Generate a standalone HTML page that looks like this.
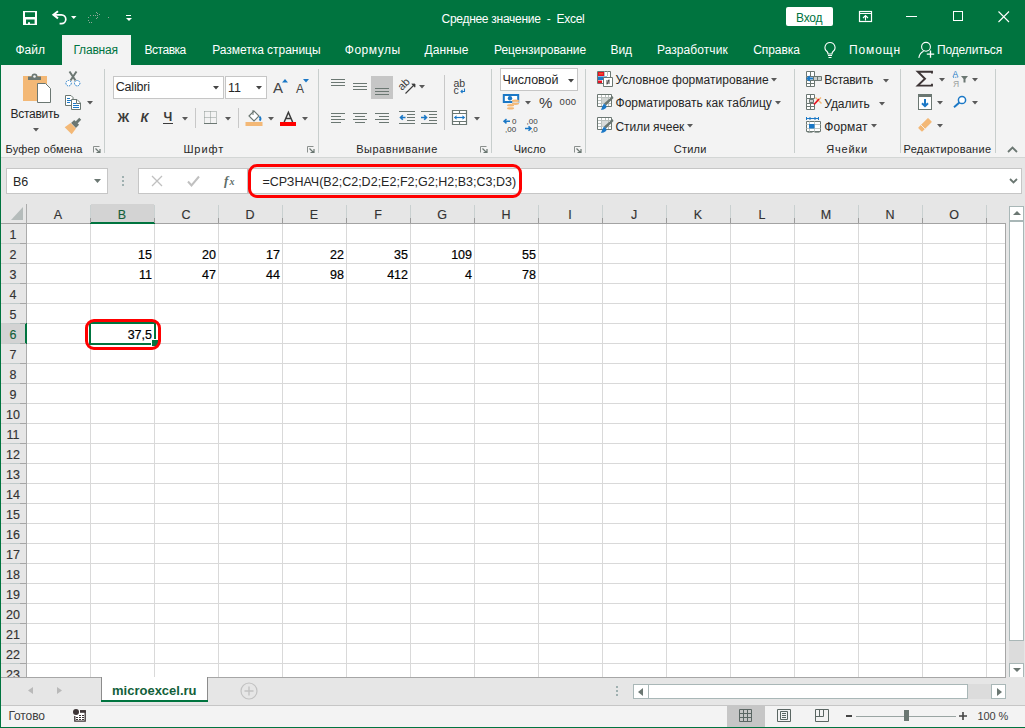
<!DOCTYPE html><html><head><meta charset="utf-8"><style>
*{box-sizing:border-box;margin:0;padding:0}
html,body{width:1025px;height:728px;overflow:hidden}
body{position:relative;background:#f3f3f3;font-family:"Liberation Sans",sans-serif;color:#262626}
.a{position:absolute}
.t{position:absolute;white-space:nowrap;line-height:1}
svg{position:absolute;overflow:visible}
.tab{position:absolute;top:45px;font-size:12px;color:#fff;white-space:nowrap;line-height:1}
.gl{position:absolute;top:145px;font-size:12px;color:#262626;white-space:nowrap;line-height:1}
.rt{position:absolute;font-size:12px;color:#262626;white-space:nowrap;line-height:1}
.v{position:absolute;font-size:12.5px;line-height:1;color:#000;text-align:right;white-space:nowrap;-webkit-text-stroke:0.2px #000}
.ch{position:absolute;top:204px;height:19px;width:64px;text-align:center;font-size:12.5px;line-height:1;color:#333;-webkit-text-stroke:0.15px currentColor}
.rh{position:absolute;left:0;width:26px;text-align:center;font-size:12.5px;line-height:1;color:#333;-webkit-text-stroke:0.15px currentColor}
</style></head><body><div class="a" style="left:0px;top:0px;width:1025px;height:65px;background:#00743f;"></div>
<svg style="left:0px;top:0px" width="60" height="30" viewBox="0 0 60 30"><path fill-rule="evenodd" fill="#fff" d="M23 11H37V25H23Z M25 12.2H35V17H25Z M26 19.6H34.6V23.8H30V22.3H28V23.8H26Z"/></svg>
<svg style="left:0px;top:0px" width="80" height="30" viewBox="0 0 80 30"><path d="M58 11.2L53.4 14.8L58 18.4" fill="none" stroke="#fff" stroke-width="2"/><path d="M54 14.8H61.4A4.4 4.4 0 0 1 61.4 23.6H59.6" fill="none" stroke="#fff" stroke-width="1.7"/></svg>
<svg style="left:70.8px;top:16px" width="5.5" height="3" viewBox="0 0 5.5 3"><path d="M0 0H5.5L2.75 3Z" fill="#fff"/></svg>
<svg style="left:0px;top:0px" width="120" height="30" viewBox="0 0 120 30"><rect x="88" y="17" width="1" height="1" fill="#8ea597"/><rect x="88" y="20" width="1" height="1" fill="#8ea597"/><rect x="89" y="22" width="1" height="1" fill="#8ea597"/><rect x="91" y="22" width="1" height="1" fill="#8ea597"/><rect x="90" y="15" width="1" height="1" fill="#8ea597"/><rect x="93" y="15" width="1" height="1" fill="#8ea597"/><rect x="95" y="15" width="1" height="1" fill="#8ea597"/><rect x="97" y="15" width="1" height="1" fill="#8ea597"/><rect x="96" y="12" width="1" height="1" fill="#8ea597"/><rect x="97" y="13" width="1" height="1" fill="#8ea597"/><rect x="99" y="14" width="1" height="1" fill="#8ea597"/><rect x="97" y="17" width="1" height="1" fill="#8ea597"/><rect x="96" y="18" width="1" height="1" fill="#8ea597"/><rect x="108" y="17" width="1" height="1" fill="#8ea597"/></svg>
<div class="a" style="left:126px;top:15px;width:5px;height:1.3px;background:#fff;"></div>
<svg style="left:125.5px;top:18px" width="6" height="3" viewBox="0 0 6 3"><path d="M0 0H6L3 3Z" fill="#fff"/></svg>
<div class="t" style="left:441.5px;top:13px;font-size:12px;color:#fff;letter-spacing:-0.28px;">Среднее значение&nbsp; -&nbsp; Excel</div>
<div class="a" style="left:786px;top:7px;width:47px;height:19px;background:#fff;border-radius:2px"></div>
<div class="t" style="left:796px;top:11.5px;font-size:12px;color:#00743f;letter-spacing:-0.233px;">Вход</div>
<svg style="left:858px;top:10px" width="15" height="12" viewBox="0 0 15 12"><rect x="1.5" y="1.5" width="12" height="10" fill="none" stroke="#fff" stroke-width="1.2"/><path d="M1.5 3.5H13.5" stroke="#fff" stroke-width="1"/><path d="M7.5 10.5V5.5M5 8L7.5 5.5L10 8" fill="none" stroke="#fff" stroke-width="1.1"/></svg>
<div class="a" style="left:906px;top:16px;width:11px;height:1px;background:#fff;"></div>
<div class="a" style="left:953px;top:11px;width:10px;height:10px;border:1px solid #fff"></div>
<svg style="left:998px;top:11px" width="12" height="12" viewBox="0 0 12 12"><path d="M0.5 0.5L11 11M11 0.5L0.5 11" stroke="#fff" stroke-width="1.1"/></svg>
<div class="a" style="left:62px;top:35px;width:69px;height:30px;background:#f3f3f3;"></div>
<div class="tab" style="left:15.5px;top:44px;color:#fff;letter-spacing:0.0px;">Файл</div>
<div class="tab" style="left:73.4px;top:44px;color:#00743f;letter-spacing:-0.167px;">Главная</div>
<div class="tab" style="left:144.6px;top:44px;color:#fff;letter-spacing:-0.5px;">Вставка</div>
<div class="tab" style="left:212.2px;top:44px;color:#fff;letter-spacing:-0.031px;">Разметка страницы</div>
<div class="tab" style="left:344.8px;top:44px;color:#fff;letter-spacing:0.5px;">Формулы</div>
<div class="tab" style="left:424.4px;top:44px;color:#fff;letter-spacing:0.12px;">Данные</div>
<div class="tab" style="left:494px;top:44px;color:#fff;letter-spacing:-0.038px;">Рецензирование</div>
<div class="tab" style="left:610.6px;top:44px;color:#fff;letter-spacing:-0.15px;">Вид</div>
<div class="tab" style="left:657px;top:44px;color:#fff;letter-spacing:0.07px;">Разработчик</div>
<div class="tab" style="left:753.2px;top:44px;color:#fff;letter-spacing:-0.067px;">Справка</div>
<div class="tab" style="left:849px;top:44px;color:#fff;letter-spacing:0.86px;">Помощн</div>
<div class="tab" style="left:936.9px;top:44px;color:#fff;letter-spacing:-0.111px;">Поделиться</div>
<svg style="left:822px;top:41px" width="16" height="18" viewBox="0 0 16 18"><path d="M8 1.5a5 5 0 0 0-3 9c.8.7 1 1.5 1 2.5h4c0-1 .2-1.8 1-2.5a5 5 0 0 0-3-9z" fill="none" stroke="#fff" stroke-width="1.1"/><path d="M6 14.5h4M6.5 16.5h3" stroke="#fff" stroke-width="1.1"/></svg>
<svg style="left:0px;top:0px" width="1025" height="65" viewBox="0 0 1025 65"><circle cx="926" cy="46.8" r="4.4" fill="none" stroke="#fff" stroke-width="1.1"/><path d="M918.8 57.8Q919.8 52.8 923.6 51.2" fill="none" stroke="#fff" stroke-width="1.1"/><path d="M930.5 50.5V57.8M926.8 54.2H934.2" stroke="#fff" stroke-width="1.3"/></svg>
<div class="a" style="left:0px;top:65px;width:1025px;height:92px;background:#f3f3f3;"></div>
<div class="a" style="left:0px;top:157px;width:1025px;height:1px;background:#d3d6d5;"></div>
<div class="a" style="left:104px;top:69px;width:1px;height:84px;background:#c8cecd;"></div>
<div class="a" style="left:318px;top:69px;width:1px;height:84px;background:#c8cecd;"></div>
<div class="a" style="left:491px;top:69px;width:1px;height:84px;background:#c8cecd;"></div>
<div class="a" style="left:585px;top:69px;width:1px;height:84px;background:#c8cecd;"></div>
<div class="a" style="left:794px;top:69px;width:1px;height:84px;background:#c8cecd;"></div>
<div class="a" style="left:900px;top:69px;width:1px;height:84px;background:#c8cecd;"></div>
<div class="a" style="left:995px;top:69px;width:1px;height:84px;background:#c8cecd;"></div>
<div class="gl" style="left:5.6px;top:144px;font-size:11px;letter-spacing:0.182px;">Буфер обмена</div>
<div class="gl" style="left:183.4px;top:144px;font-size:11px;letter-spacing:0.9px;">Шрифт</div>
<div class="gl" style="left:356.3px;top:144px;font-size:11px;letter-spacing:0.482px;">Выравнивание</div>
<div class="gl" style="left:513.7px;top:144px;font-size:11px;letter-spacing:0.075px;">Число</div>
<div class="gl" style="left:673.8px;top:144px;font-size:11px;letter-spacing:0.2px;">Стили</div>
<div class="gl" style="left:826.2px;top:144px;font-size:11px;letter-spacing:0.8px;">Ячейки</div>
<div class="gl" style="left:903.5px;top:144px;font-size:11px;letter-spacing:0.285px;">Редактирование</div>
<svg style="left:93px;top:146px" width="8" height="7" viewBox="0 0 8 7"><path d="M0.5 6.5V0.5H6.5" fill="none" stroke="#8a8f8d" stroke-width="1"/><path d="M2.5 2.5L6.5 6.5M3.5 6.5H7V3" fill="none" stroke="#6b7772" stroke-width="1.2"/></svg>
<svg style="left:307px;top:146px" width="8" height="7" viewBox="0 0 8 7"><path d="M0.5 6.5V0.5H6.5" fill="none" stroke="#8a8f8d" stroke-width="1"/><path d="M2.5 2.5L6.5 6.5M3.5 6.5H7V3" fill="none" stroke="#6b7772" stroke-width="1.2"/></svg>
<svg style="left:480px;top:146px" width="8" height="7" viewBox="0 0 8 7"><path d="M0.5 6.5V0.5H6.5" fill="none" stroke="#8a8f8d" stroke-width="1"/><path d="M2.5 2.5L6.5 6.5M3.5 6.5H7V3" fill="none" stroke="#6b7772" stroke-width="1.2"/></svg>
<svg style="left:574px;top:146px" width="8" height="7" viewBox="0 0 8 7"><path d="M0.5 6.5V0.5H6.5" fill="none" stroke="#8a8f8d" stroke-width="1"/><path d="M2.5 2.5L6.5 6.5M3.5 6.5H7V3" fill="none" stroke="#6b7772" stroke-width="1.2"/></svg>
<svg style="left:22px;top:72px" width="30" height="32" viewBox="0 0 30 32"><rect x="1" y="4" width="24" height="25" fill="#f3b876"/><path d="M6 8V4.5H9.5a3 3 0 0 1 6 0H19V8Z" fill="#6b7772"/><circle cx="12.5" cy="4.5" r="1.3" fill="#f3f3f3"/><path d="M15.5 11.5H23.5L28.5 16.5V30.5H15.5Z" fill="#fff" stroke="#6b7772" stroke-width="1"/></svg>
<div class="t" style="left:10.6px;top:108px;font-size:12px;color:#262626;letter-spacing:-0.286px;">Вставить</div>
<svg style="left:32.5px;top:127.5px" width="6" height="3.5" viewBox="0 0 6 3.5"><path d="M0 0H6L3.0 3.5Z" fill="#595959"/></svg>
<svg style="left:0px;top:0px" width="100" height="140" viewBox="0 0 100 140"><path d="M69.5 71.5L75.5 80.5M76.5 71.5L70.5 80.5" stroke="#6b7772" stroke-width="2"/><circle cx="68.6" cy="83.2" r="2.7" fill="#fff" stroke="#1b78c6" stroke-width="1" stroke-dasharray="1.4 0.9"/><circle cx="77.2" cy="83.2" r="2.7" fill="#fff" stroke="#1b78c6" stroke-width="1" stroke-dasharray="1.4 0.9"/></svg>
<svg style="left:0px;top:0px" width="100" height="140" viewBox="0 0 100 140"><path d="M65.5 95.5H71L73 97.5V105.5H65.5Z" fill="#fff" stroke="#6b7772"/><path d="M67 98.5H70M67 100.5H71M67 102.5H70" stroke="#1b78c6"/><path d="M71.5 99.5H77L80.5 103V109.5H71.5Z" fill="#fff" stroke="#6b7772"/><path d="M76.5 99.5V103.5H80.5" fill="none" stroke="#6b7772"/><path d="M73 103.5H76M73 105.5H79M73 107.5H79" stroke="#1b78c6"/></svg>
<svg style="left:86.5px;top:101px" width="6" height="3.5" viewBox="0 0 6 3.5"><path d="M0 0H6L3.0 3.5Z" fill="#595959"/></svg>
<svg style="left:0px;top:0px" width="100" height="140" viewBox="0 0 100 140"><g transform="translate(73.5 125.5) rotate(45)"><rect x="-1.4" y="-9.5" width="2.8" height="5.5" fill="#6b7772"/><rect x="-3.4" y="-4.5" width="6.8" height="4.5" fill="#6b7772"/><path d="M-3.8 0.3H3.8L5 7.5H-5Z" fill="#f3b876"/></g></svg>
<div class="a" style="left:113px;top:76px;width:111px;height:23px;background:#fff;border:1px solid #c6c6c6"></div>
<div class="t" style="left:115.7px;top:81px;font-size:12.5px;color:#262626;letter-spacing:-0.167px;">Calibri</div>
<svg style="left:213.0px;top:85.5px" width="6" height="3.5" viewBox="0 0 6 3.5"><path d="M0 0H6L3.0 3.5Z" fill="#444"/></svg>
<div class="a" style="left:225px;top:76px;width:42px;height:23px;background:#fff;border:1px solid #c6c6c6"></div>
<div class="t" style="left:228px;top:82px;font-size:12.5px;color:#262626;">11</div>
<svg style="left:256.0px;top:85.5px" width="6" height="3.5" viewBox="0 0 6 3.5"><path d="M0 0H6L3.0 3.5Z" fill="#444"/></svg>
<div class="t" style="left:273px;top:80px;font-size:15px;color:#444;">A</div>
<svg style="left:282px;top:78.5px" width="6" height="3.5" viewBox="0 0 6 3.5"><path d="M0 3.5L3 0L6 3.5Z" fill="#1b78c6"/></svg>
<div class="t" style="left:296px;top:83px;font-size:12px;color:#444;">A</div>
<svg style="left:302.5px;top:78.5px" width="6" height="3.5" viewBox="0 0 6 3.5"><path d="M0 0H6L3 3.5Z" fill="#1b78c6"/></svg>
<div class="t" style="left:117.5px;top:111px;font-size:13px;color:#3b3b3b;font-weight:bold">Ж</div>
<div class="t" style="left:140.5px;top:111px;font-size:13px;color:#3b3b3b;font-weight:bold;font-style:italic">К</div>
<div class="t" style="left:163.5px;top:111px;font-size:12.5px;color:#3b3b3b;font-weight:bold">Ч</div>
<div class="a" style="left:163px;top:123px;width:10px;height:1px;background:#3b3b3b;"></div>
<svg style="left:181.5px;top:116.5px" width="6" height="3.5" viewBox="0 0 6 3.5"><path d="M0 0H6L3.0 3.5Z" fill="#595959"/></svg>
<div class="a" style="left:195px;top:108px;width:1px;height:20px;background:#c8c8c8;"></div>
<svg style="left:0px;top:0px" width="320" height="140" viewBox="0 0 320 140"><path d="M204.5 111.5H216.5V123M204.5 111.5V123M210.5 111.5V123M204.5 117.5H216.5" fill="none" stroke="#8d9692" stroke-width="1" stroke-dasharray="1 1"/><path d="M204 123.5H217" stroke="#6b7772" stroke-width="1"/></svg>
<svg style="left:224.5px;top:116.5px" width="6" height="3.5" viewBox="0 0 6 3.5"><path d="M0 0H6L3.0 3.5Z" fill="#595959"/></svg>
<div class="a" style="left:238px;top:108px;width:1px;height:20px;background:#c8c8c8;"></div>
<svg style="left:245px;top:107px" width="18" height="20" viewBox="0 0 18 20"><path d="M4 9L9 4L14 9L9 14Z" fill="#fff" stroke="#6b7772" stroke-width="1.1"/><path d="M8 3V8" stroke="#6b7772"/><path d="M14.5 9.5q2 2.5 0 4" fill="none" stroke="#1b78c6" stroke-width="2"/><rect x="0.5" y="15" width="17" height="4" fill="#f3b876"/></svg>
<svg style="left:267.5px;top:116.5px" width="6" height="3.5" viewBox="0 0 6 3.5"><path d="M0 0H6L3.0 3.5Z" fill="#595959"/></svg>
<svg style="left:0px;top:0px" width="320" height="140" viewBox="0 0 320 140"><path d="M284.2 122L288.4 112.3L292.6 122M285.8 118.6H291" fill="none" stroke="#3b3b3b" stroke-width="1.5"/></svg>
<div class="a" style="left:280px;top:122px;width:16px;height:4px;background:#ff0000;"></div>
<svg style="left:302.0px;top:116.5px" width="6" height="3.5" viewBox="0 0 6 3.5"><path d="M0 0H6L3.0 3.5Z" fill="#595959"/></svg>
<svg style="left:331px;top:79px" width="14" height="9" viewBox="0 0 14 9"><rect x="0" y="0" width="14" height="1" fill="#6b7772"/><rect x="0" y="3" width="14" height="1" fill="#6b7772"/><rect x="0" y="6" width="14" height="1" fill="#6b7772"/></svg>
<svg style="left:353px;top:83px" width="14" height="9" viewBox="0 0 14 9"><rect x="0" y="0" width="14" height="1" fill="#6b7772"/><rect x="0" y="3" width="14" height="1" fill="#6b7772"/><rect x="0" y="6" width="14" height="1" fill="#6b7772"/></svg>
<div class="a" style="left:371px;top:76px;width:22px;height:23px;background:#c6c6c6;"></div>
<svg style="left:375px;top:88px" width="14" height="9" viewBox="0 0 14 9"><rect x="0" y="0" width="14" height="1" fill="#6b7772"/><rect x="0" y="3" width="14" height="1" fill="#6b7772"/><rect x="0" y="6" width="14" height="1" fill="#6b7772"/></svg>
<svg style="left:0px;top:0px" width="440" height="100" viewBox="0 0 440 100"><text x="402" y="91" font-size="11" fill="#3b3b3b" font-family="Liberation Sans" transform="rotate(-45 402 91)">ab</text><path d="M405.5 93.5L414.5 84.5" stroke="#3b3b3b" stroke-width="1.1"/><path d="M411.8 84H415V87.2Z" fill="#3b3b3b" stroke="#3b3b3b" stroke-width="0.8"/></svg>
<svg style="left:418.5px;top:85px" width="6" height="3.5" viewBox="0 0 6 3.5"><path d="M0 0H6L3.0 3.5Z" fill="#595959"/></svg>
<svg style="left:331px;top:113px" width="14" height="11" viewBox="0 0 14 11"><rect x="0" y="0" width="14" height="1" fill="#6b7772"/><rect x="0" y="3" width="10" height="1" fill="#6b7772"/><rect x="0" y="6" width="14" height="1" fill="#6b7772"/><rect x="0" y="9" width="10" height="1" fill="#6b7772"/></svg>
<svg style="left:353px;top:113px" width="14" height="11" viewBox="0 0 14 11"><rect x="0" y="0" width="14" height="1" fill="#6b7772"/><rect x="2" y="3" width="10" height="1" fill="#6b7772"/><rect x="0" y="6" width="14" height="1" fill="#6b7772"/><rect x="2" y="9" width="10" height="1" fill="#6b7772"/></svg>
<svg style="left:375px;top:113px" width="14" height="11" viewBox="0 0 14 11"><rect x="0" y="0" width="14" height="1" fill="#6b7772"/><rect x="4" y="3" width="10" height="1" fill="#6b7772"/><rect x="0" y="6" width="14" height="1" fill="#6b7772"/><rect x="4" y="9" width="10" height="1" fill="#6b7772"/></svg>
<svg style="left:399px;top:111px" width="17" height="13" viewBox="0 0 17 13"><rect x="0" y="0" width="16" height="1" fill="#6b7772"/><rect x="0" y="12" width="16" height="1" fill="#6b7772"/><rect x="8" y="3" width="8" height="1" fill="#6b7772"/><rect x="8" y="6" width="8" height="1" fill="#6b7772"/><rect x="8" y="9" width="8" height="1" fill="#6b7772"/><path d="M6.5 6.5H1.5M3.8 4.2L1.5 6.5L3.8 8.8" fill="none" stroke="#1b78c6" stroke-width="1.6"/></svg>
<svg style="left:421px;top:111px" width="17" height="13" viewBox="0 0 17 13"><rect x="0" y="0" width="16" height="1" fill="#6b7772"/><rect x="0" y="12" width="16" height="1" fill="#6b7772"/><rect x="8" y="3" width="8" height="1" fill="#6b7772"/><rect x="8" y="6" width="8" height="1" fill="#6b7772"/><rect x="8" y="9" width="8" height="1" fill="#6b7772"/><path d="M0 6.5H5.5M3.2 4.2L5.5 6.5L3.2 8.8" fill="none" stroke="#1b78c6" stroke-width="1.6"/></svg>
<div class="a" style="left:444px;top:75px;width:1px;height:55px;background:#c8c8c8;"></div>
<svg style="left:0px;top:0px" width="480" height="100" viewBox="0 0 480 100"><text x="453.5" y="87" font-size="10.5" fill="#3b3b3b" font-family="Liberation Sans">ab</text><text x="453.5" y="93.6" font-size="10.5" fill="#3b3b3b" font-family="Liberation Sans">c</text><path d="M464.5 88.5V91.5H461M462.5 90L461 91.5L462.5 93" fill="none" stroke="#1b78c6" stroke-width="1.1"/></svg>
<svg style="left:0px;top:0px" width="500" height="140" viewBox="0 0 500 140"><path d="M452.5 110.5H466.5V124.5H452.5Z" fill="#fff" stroke="#6b7772" stroke-width="1.2"/><path d="M452.5 113.5H466.5M452.5 121.5H466.5M459.5 110.5V113.5M459.5 121.5V124.5" stroke="#6b7772" stroke-width="1.1"/><path d="M454.5 117.5H464.5" stroke="#1b78c6" stroke-width="1.2"/><path d="M454 117.5L456.5 115.2V119.8Z M465 117.5L462.5 115.2V119.8Z" fill="#1b78c6"/></svg>
<svg style="left:473.5px;top:116.5px" width="6" height="3.5" viewBox="0 0 6 3.5"><path d="M0 0H6L3.0 3.5Z" fill="#595959"/></svg>
<div class="a" style="left:500px;top:68px;width:78px;height:23px;background:#fff;border:1px solid #c6c6c6"></div>
<div class="t" style="left:502.5px;top:74px;font-size:12.5px;color:#262626;letter-spacing:-0.071px;">Числовой</div>
<svg style="left:567.5px;top:78.5px" width="6" height="3.5" viewBox="0 0 6 3.5"><path d="M0 0H6L3.0 3.5Z" fill="#444"/></svg>
<svg style="left:0px;top:0px" width="600" height="140" viewBox="0 0 600 140"><path d="M503.8 95H518.2V102H503.8Z" fill="#fff" stroke="#1b78c6" stroke-width="2"/><circle cx="510" cy="98.3" r="2.2" fill="#1b78c6"/><ellipse cx="515.5" cy="101" rx="3.6" ry="1.4" fill="#f3b876"/><ellipse cx="515.5" cy="103.6" rx="3.6" ry="1.4" fill="#f3b876"/><path d="M512 102.3H519" stroke="#fff" stroke-width="0.7"/><ellipse cx="510.5" cy="105.5" rx="3.6" ry="1.4" fill="#f3b876"/><ellipse cx="510.5" cy="108.2" rx="3.6" ry="1.4" fill="#f3b876"/><path d="M507 106.9H514" stroke="#fff" stroke-width="0.7"/></svg>
<svg style="left:524.5px;top:100.8px" width="6" height="3.5" viewBox="0 0 6 3.5"><path d="M0 0H6L3.0 3.5Z" fill="#595959"/></svg>
<div class="t" style="left:539px;top:94.5px;font-size:15px;color:#3b3b3b;">%</div>
<div class="t" style="left:559.6px;top:97px;font-size:9.5px;color:#3b3b3b;letter-spacing:0.3px">000</div>
<svg style="left:0px;top:0px" width="600" height="140" viewBox="0 0 600 140"><path d="M510 121.2H504M506.5 119L504 121.2L506.5 123.4" fill="none" stroke="#1b78c6" stroke-width="1.5"/><text x="512" y="124" font-size="8" fill="#3b3b3b" font-family="Liberation Sans">0</text><text x="505" y="131.5" font-size="8" fill="#3b3b3b" font-family="Liberation Sans">,00</text><text x="526.5" y="124" font-size="8" fill="#3b3b3b" font-family="Liberation Sans">,00</text><path d="M525 128.6H531M528.5 126.4L531 128.6L528.5 130.8" fill="none" stroke="#1b78c6" stroke-width="1.5"/><text x="531" y="131.5" font-size="8" fill="#3b3b3b" font-family="Liberation Sans">,0</text></svg>
<svg style="left:0px;top:0px" width="620" height="140" viewBox="0 0 620 140"><path d="M597.5 71.5H610.5V83.5H597.5Z" fill="#fff" stroke="#6b7772"/><path d="M604.5 71.5V76M607.5 71.5V76" stroke="#b9c0bd"/><rect x="598" y="72" width="6" height="4" fill="#e81123"/><circle cx="600" cy="73.8" r="0.6" fill="#ffd34d"/><circle cx="602" cy="73.8" r="0.6" fill="#ffd34d"/><rect x="598" y="76.5" width="9" height="3.5" fill="#1b78c6"/><rect x="598" y="80.5" width="4" height="2.5" fill="#e81123"/><path d="M603.5 77.5H612.5V86.5H603.5Z" fill="#fff" stroke="#6b7772"/><path d="M606 81H610M606 83H610M609 79.5L607 84.5" stroke="#3b3b3b" stroke-width="0.9"/></svg>
<svg style="left:0px;top:0px" width="620" height="140" viewBox="0 0 620 140"><path d="M597.5 94.5H611.5V106.5H597.5Z" fill="#fff" stroke="#6b7772"/><path d="M601.5 95.0V106.0" stroke="#b9c0bd"/><path d="M605.5 95.0V106.0" stroke="#b9c0bd"/><path d="M608.5 95.0V106.0" stroke="#b9c0bd"/><path d="M598 97.5H611" stroke="#b9c0bd"/><path d="M598 100.5H611" stroke="#b9c0bd"/><path d="M598 103.5H611" stroke="#b9c0bd"/><rect x="602" y="98.0" width="6" height="5.5" fill="#d0d4d2"/><path d="M604 103.5L612.5 96.0L613.5 98.0L606 105.5Z" fill="#6b7772"/><path d="M601 110.0Q602 106.0 604 103.5L606.5 106.0Q607 109.0 601 110.0Z" fill="#1b78c6"/></svg>
<svg style="left:0px;top:0px" width="620" height="140" viewBox="0 0 620 140"><path d="M597.5 117.5H611.5V129.5H597.5Z" fill="#fff" stroke="#6b7772"/><path d="M601.5 118.0V129.0" stroke="#b9c0bd"/><path d="M605.5 118.0V129.0" stroke="#b9c0bd"/><path d="M608.5 118.0V129.0" stroke="#b9c0bd"/><path d="M598 120.5H611" stroke="#b9c0bd"/><path d="M598 123.5H611" stroke="#b9c0bd"/><path d="M598 126.5H611" stroke="#b9c0bd"/><rect x="602" y="121.0" width="6" height="5.5" fill="#d9dcdb"/><path d="M604 126.5L612.5 119.0L613.5 121.0L606 128.5Z" fill="#6b7772"/><path d="M601 133.0Q602 129.0 604 126.5L606.5 129.0Q607 132.0 601 133.0Z" fill="#1b78c6"/></svg>
<div class="t" style="left:615.5px;top:74px;font-size:12px;color:#262626;letter-spacing:0.023px;">Условное форматирование</div>
<svg style="left:770.5px;top:78px" width="6" height="3.5" viewBox="0 0 6 3.5"><path d="M0 0H6L3.0 3.5Z" fill="#595959"/></svg>
<div class="t" style="left:615.5px;top:97px;font-size:12px;color:#262626;letter-spacing:0.008px;">Форматировать как таблицу</div>
<svg style="left:774.5px;top:101px" width="6" height="3.5" viewBox="0 0 6 3.5"><path d="M0 0H6L3.0 3.5Z" fill="#595959"/></svg>
<div class="t" style="left:615.5px;top:120.5px;font-size:12px;color:#262626;letter-spacing:-0.05px;">Стили ячеек</div>
<svg style="left:686.5px;top:124px" width="6" height="3.5" viewBox="0 0 6 3.5"><path d="M0 0H6L3.0 3.5Z" fill="#595959"/></svg>
<svg style="left:0px;top:0px" width="1025" height="140" viewBox="0 0 1025 140"><path d="M806.5 71.5H814.5V76.5H806.5Z M810.5 71.5V76.5" fill="#fff" stroke="#6b7772"/><path d="M806.5 80.5H814.5V86.5H806.5Z M810.5 80.5V86.5 M806.5 83.5H814.5" fill="#fff" stroke="#6b7772"/><path d="M806.5 76.5V80.5" stroke="#6b7772"/><path d="M813.5 76.5H821.5V80.5H813.5Z" fill="#c9cfcc" stroke="#6b7772"/><path d="M817.5 76.5V80.5" stroke="#6b7772"/><path d="M813 78.5H807.5M809.8 76.2L807.5 78.5L809.8 80.8" fill="none" stroke="#1b78c6" stroke-width="1.8"/></svg>
<div class="t" style="left:824.3px;top:74px;font-size:12px;color:#262626;letter-spacing:-0.271px;">Вставить</div>
<svg style="left:882.5px;top:78.5px" width="6" height="3.5" viewBox="0 0 6 3.5"><path d="M0 0H6L3.0 3.5Z" fill="#595959"/></svg>
<svg style="left:0px;top:0px" width="1025" height="140" viewBox="0 0 1025 140"><path d="M806.5 94.5H814.5V98.5H806.5Z M810.5 94.5V98.5" fill="#fff" stroke="#6b7772"/><path d="M806.5 103.5H814.5V109.5H806.5Z M810.5 103.5V109.5 M806.5 106.5H814.5" fill="#fff" stroke="#6b7772"/><path d="M806.5 98.5V103.5" stroke="#6b7772"/><path d="M809.5 99.5H813.5V102.5H809.5Z" fill="#c9cfcc" stroke="#6b7772"/><path d="M815.5 97.5L821.5 103.5M821 97.5L815.5 103" stroke="#f3b876" stroke-width="1.4"/><path d="M814 104.5L819 99" stroke="#e81123" stroke-width="1.6"/></svg>
<div class="t" style="left:824.3px;top:97.5px;font-size:12px;color:#262626;letter-spacing:-0.067px;">Удалить</div>
<svg style="left:878.5px;top:101.5px" width="6" height="3.5" viewBox="0 0 6 3.5"><path d="M0 0H6L3.0 3.5Z" fill="#595959"/></svg>
<svg style="left:0px;top:0px" width="1025" height="140" viewBox="0 0 1025 140"><path d="M806.5 118.5H818.5M806.5 117V120M818.5 117V120" fill="none" stroke="#1b78c6" stroke-width="1"/><path d="M809 118.5H816M810.5 117L809 118.5L810.5 120M814.5 117L816 118.5L814.5 120" fill="none" stroke="#1b78c6" stroke-width="1"/><path d="M806.5 121.5H820.5V131.5H806.5Z" fill="#fff" stroke="#6b7772"/><path d="M806.5 124.5H820.5M806.5 128.5H820.5M809.5 121.5V131.5M814.5 121.5V131.5" stroke="#c3c9c6"/><rect x="809" y="124" width="5.5" height="4.5" fill="#1b78c6"/><path d="M807.5 132.5H812.5M814.5 132.5H819.5" stroke="#9aa39f"/></svg>
<div class="t" style="left:824.3px;top:120.5px;font-size:12px;color:#262626;letter-spacing:0.1px;">Формат</div>
<svg style="left:870.5px;top:124px" width="6" height="3.5" viewBox="0 0 6 3.5"><path d="M0 0H6L3.0 3.5Z" fill="#595959"/></svg>
<svg style="left:0px;top:0px" width="1025" height="140" viewBox="0 0 1025 140"><path d="M932 73.5V71.8H917.8L925 78.8L917.8 85.6H932V83.8" fill="none" stroke="#3d3536" stroke-width="1.9"/></svg>
<svg style="left:938.5px;top:77.5px" width="6" height="3.5" viewBox="0 0 6 3.5"><path d="M0 0H6L3.0 3.5Z" fill="#595959"/></svg>
<svg style="left:0px;top:0px" width="1025" height="140" viewBox="0 0 1025 140"><text x="952.5" y="76.5" font-size="8.5" fill="#1b78c6" font-family="Liberation Sans">A</text><path d="M953 77.3H958.5" stroke="#1b78c6" stroke-width="0.8" stroke-dasharray="1 0.8"/><text x="953" y="86.5" font-size="8.5" fill="#9aa09d" font-family="Liberation Sans">Я</text><path d="M961 76H968L965.5 79V82.5L963.5 82.5V79Z" fill="#6b7772"/></svg>
<svg style="left:971.5px;top:77.5px" width="6" height="3.5" viewBox="0 0 6 3.5"><path d="M0 0H6L3.0 3.5Z" fill="#595959"/></svg>
<svg style="left:0px;top:0px" width="1025" height="140" viewBox="0 0 1025 140"><rect x="918.5" y="94.5" width="13" height="15" fill="#fff" stroke="#6b7772"/><rect x="918" y="94" width="14" height="3" fill="#6b7772"/><path d="M925 99V106M922 103.2L925 106.2L928 103.2" fill="none" stroke="#1b78c6" stroke-width="2"/></svg>
<svg style="left:936.5px;top:100.8px" width="6" height="3.5" viewBox="0 0 6 3.5"><path d="M0 0H6L3.0 3.5Z" fill="#595959"/></svg>
<svg style="left:0px;top:0px" width="1025" height="140" viewBox="0 0 1025 140"><circle cx="962" cy="100" r="3.6" fill="#fff" stroke="#1b78c6" stroke-width="1.5"/><path d="M959.4 102.6L954 107.2" stroke="#1b78c6" stroke-width="2"/></svg>
<svg style="left:971.5px;top:100.8px" width="6" height="3.5" viewBox="0 0 6 3.5"><path d="M0 0H6L3.0 3.5Z" fill="#595959"/></svg>
<svg style="left:0px;top:0px" width="1025" height="140" viewBox="0 0 1025 140"><path d="M918.6 127.2L927.4 118.4Q928 117.8 928.6 118.4L931.4 121.2Q932 121.8 931.4 122.4L922.6 131.2Q922 131.8 921.4 131.2L918.6 128.4Q918 127.8 918.6 127.2Z" fill="#f3b876"/><path d="M920.8 124.8L925 129" stroke="#f3f3f3" stroke-width="0.9"/></svg>
<svg style="left:936.5px;top:124px" width="6" height="3.5" viewBox="0 0 6 3.5"><path d="M0 0H6L3.0 3.5Z" fill="#595959"/></svg>
<svg style="left:1007px;top:146px" width="11" height="7" viewBox="0 0 11 7"><path d="M1 6L5.5 1.5L10 6" fill="none" stroke="#6b7772" stroke-width="1.8"/></svg>
<div class="a" style="left:0px;top:158px;width:1025px;height:46px;background:#e6e6e6;"></div>
<div class="a" style="left:6px;top:168px;width:102px;height:26px;background:#fff;border:1px solid #c6c6c6"></div>
<div class="t" style="left:13px;top:176px;font-size:12.5px;color:#262626;">B6</div>
<svg style="left:93.5px;top:179px" width="7" height="4" viewBox="0 0 7 4"><path d="M0 0H7L3.5 4Z" fill="#6b7772"/></svg>
<div class="a" style="left:122px;top:176px;width:2px;height:2px;background:#9fb0b0;"></div>
<div class="a" style="left:122px;top:180px;width:2px;height:2px;background:#9fb0b0;"></div>
<div class="a" style="left:122px;top:184px;width:2px;height:2px;background:#9fb0b0;"></div>
<div class="a" style="left:138px;top:168px;width:110px;height:26px;background:#fff;border:1px solid #c6c6c6"></div>
<svg style="left:151px;top:175px" width="12" height="12" viewBox="0 0 12 12"><path d="M1 1L11 11M11 1L1 11" stroke="#c0c0c0" stroke-width="1.3"/></svg>
<svg style="left:187px;top:175px" width="13" height="12" viewBox="0 0 13 12"><path d="M1 6.5L4.5 10.5L12 1.5" fill="none" stroke="#c0c0c0" stroke-width="2"/></svg>
<svg style="left:0px;top:0px" width="300" height="200" viewBox="0 0 300 200"><text x="224" y="184.5" font-size="13" font-style="italic" font-weight="bold" fill="#5e6d68" font-family="Liberation Serif">f</text><text x="229.5" y="184.5" font-size="10" font-style="italic" font-weight="bold" fill="#5e6d68" font-family="Liberation Serif">x</text></svg>
<div class="a" style="left:248px;top:168px;width:774px;height:26px;background:#fff;border:1px solid #c6c6c6"></div>
<div class="t" style="left:262.4px;top:175.5px;font-size:12.5px;color:#262626;letter-spacing:0.014px;">=СРЗНАЧ(B2;C2;D2;E2;F2;G2;H2;B3;C3;D3)</div>
<svg style="left:1009px;top:178px" width="9" height="6" viewBox="0 0 9 6"><path d="M1 1L4.5 4.5L8 1" fill="none" stroke="#6b7772" stroke-width="1.8"/></svg>
<div class="a" style="left:0px;top:204px;width:1025px;height:20px;background:#e6e6e6;"></div>
<div class="a" style="left:0px;top:223px;width:1006px;height:1px;background:#a3a3a3;"></div>
<svg style="left:11px;top:207px" width="12" height="13" viewBox="0 0 12 13"><path d="M12 0V13H0Z" fill="#b5bcbb"/></svg>
<div class="a" style="left:26px;top:204px;width:1px;height:20px;background:#ababab;"></div>
<div class="a" style="left:91px;top:204px;width:63px;height:19px;background:#d3d3d3;"></div>
<div class="a" style="left:90px;top:222px;width:65px;height:2px;background:#00743f;"></div>
<div class="ch" style="left:26px;color:#333;padding-top:5px">A</div>
<div class="a" style="left:90px;top:205px;width:1px;height:13px;background:#c9d0d0;"></div>
<div class="a" style="left:90px;top:218px;width:1px;height:5px;background:#9c9c9c;"></div>
<div class="ch" style="left:90px;color:#15603a;padding-top:5px">B</div>
<div class="a" style="left:154px;top:205px;width:1px;height:13px;background:#c9d0d0;"></div>
<div class="a" style="left:154px;top:218px;width:1px;height:5px;background:#9c9c9c;"></div>
<div class="ch" style="left:154px;color:#333;padding-top:5px">C</div>
<div class="a" style="left:218px;top:205px;width:1px;height:13px;background:#c9d0d0;"></div>
<div class="a" style="left:218px;top:218px;width:1px;height:5px;background:#9c9c9c;"></div>
<div class="ch" style="left:218px;color:#333;padding-top:5px">D</div>
<div class="a" style="left:282px;top:205px;width:1px;height:13px;background:#c9d0d0;"></div>
<div class="a" style="left:282px;top:218px;width:1px;height:5px;background:#9c9c9c;"></div>
<div class="ch" style="left:282px;color:#333;padding-top:5px">E</div>
<div class="a" style="left:346px;top:205px;width:1px;height:13px;background:#c9d0d0;"></div>
<div class="a" style="left:346px;top:218px;width:1px;height:5px;background:#9c9c9c;"></div>
<div class="ch" style="left:346px;color:#333;padding-top:5px">F</div>
<div class="a" style="left:410px;top:205px;width:1px;height:13px;background:#c9d0d0;"></div>
<div class="a" style="left:410px;top:218px;width:1px;height:5px;background:#9c9c9c;"></div>
<div class="ch" style="left:410px;color:#333;padding-top:5px">G</div>
<div class="a" style="left:474px;top:205px;width:1px;height:13px;background:#c9d0d0;"></div>
<div class="a" style="left:474px;top:218px;width:1px;height:5px;background:#9c9c9c;"></div>
<div class="ch" style="left:474px;color:#333;padding-top:5px">H</div>
<div class="a" style="left:538px;top:205px;width:1px;height:13px;background:#c9d0d0;"></div>
<div class="a" style="left:538px;top:218px;width:1px;height:5px;background:#9c9c9c;"></div>
<div class="ch" style="left:538px;color:#333;padding-top:5px">I</div>
<div class="a" style="left:602px;top:205px;width:1px;height:13px;background:#c9d0d0;"></div>
<div class="a" style="left:602px;top:218px;width:1px;height:5px;background:#9c9c9c;"></div>
<div class="ch" style="left:602px;color:#333;padding-top:5px">J</div>
<div class="a" style="left:666px;top:205px;width:1px;height:13px;background:#c9d0d0;"></div>
<div class="a" style="left:666px;top:218px;width:1px;height:5px;background:#9c9c9c;"></div>
<div class="ch" style="left:666px;color:#333;padding-top:5px">K</div>
<div class="a" style="left:730px;top:205px;width:1px;height:13px;background:#c9d0d0;"></div>
<div class="a" style="left:730px;top:218px;width:1px;height:5px;background:#9c9c9c;"></div>
<div class="ch" style="left:730px;color:#333;padding-top:5px">L</div>
<div class="a" style="left:794px;top:205px;width:1px;height:13px;background:#c9d0d0;"></div>
<div class="a" style="left:794px;top:218px;width:1px;height:5px;background:#9c9c9c;"></div>
<div class="ch" style="left:794px;color:#333;padding-top:5px">M</div>
<div class="a" style="left:858px;top:205px;width:1px;height:13px;background:#c9d0d0;"></div>
<div class="a" style="left:858px;top:218px;width:1px;height:5px;background:#9c9c9c;"></div>
<div class="ch" style="left:858px;color:#333;padding-top:5px">N</div>
<div class="a" style="left:922px;top:205px;width:1px;height:13px;background:#c9d0d0;"></div>
<div class="a" style="left:922px;top:218px;width:1px;height:5px;background:#9c9c9c;"></div>
<div class="ch" style="left:922px;color:#333;padding-top:5px">O</div>
<div class="a" style="left:986px;top:205px;width:1px;height:13px;background:#c9d0d0;"></div>
<div class="a" style="left:986px;top:218px;width:1px;height:5px;background:#9c9c9c;"></div>
<div class="a" style="left:0px;top:224px;width:1005px;height:453px;background:#fff;"></div>
<div class="a" style="left:0px;top:224px;width:26px;height:453px;background:#e6e6e6;"></div>
<div class="a" style="left:26px;top:224px;width:1px;height:453px;background:#ababab;"></div>
<div class="a" style="left:0px;top:324px;width:25px;height:20px;background:#d3d3d3;"></div>
<div class="a" style="left:25px;top:323px;width:2px;height:21px;background:#00743f;"></div>
<div class="rh" style="top:229px;color:#333">1</div>
<div class="a" style="left:0px;top:243px;width:10px;height:1px;background:#cfcfcf;"></div>
<div class="a" style="left:10px;top:243px;width:10px;height:1px;background:#bfc9c9;"></div>
<div class="a" style="left:20px;top:243px;width:6px;height:1px;background:#a6a6a6;"></div>
<div class="rh" style="top:249px;color:#333">2</div>
<div class="a" style="left:0px;top:263px;width:10px;height:1px;background:#cfcfcf;"></div>
<div class="a" style="left:10px;top:263px;width:10px;height:1px;background:#bfc9c9;"></div>
<div class="a" style="left:20px;top:263px;width:6px;height:1px;background:#a6a6a6;"></div>
<div class="rh" style="top:269px;color:#333">3</div>
<div class="a" style="left:0px;top:283px;width:10px;height:1px;background:#cfcfcf;"></div>
<div class="a" style="left:10px;top:283px;width:10px;height:1px;background:#bfc9c9;"></div>
<div class="a" style="left:20px;top:283px;width:6px;height:1px;background:#a6a6a6;"></div>
<div class="rh" style="top:289px;color:#333">4</div>
<div class="a" style="left:0px;top:303px;width:10px;height:1px;background:#cfcfcf;"></div>
<div class="a" style="left:10px;top:303px;width:10px;height:1px;background:#bfc9c9;"></div>
<div class="a" style="left:20px;top:303px;width:6px;height:1px;background:#a6a6a6;"></div>
<div class="rh" style="top:309px;color:#333">5</div>
<div class="a" style="left:0px;top:323px;width:10px;height:1px;background:#cfcfcf;"></div>
<div class="a" style="left:10px;top:323px;width:10px;height:1px;background:#bfc9c9;"></div>
<div class="a" style="left:20px;top:323px;width:6px;height:1px;background:#a6a6a6;"></div>
<div class="rh" style="top:329px;color:#15603a">6</div>
<div class="a" style="left:0px;top:343px;width:10px;height:1px;background:#cfcfcf;"></div>
<div class="a" style="left:10px;top:343px;width:10px;height:1px;background:#bfc9c9;"></div>
<div class="a" style="left:20px;top:343px;width:6px;height:1px;background:#a6a6a6;"></div>
<div class="rh" style="top:349px;color:#333">7</div>
<div class="a" style="left:0px;top:363px;width:10px;height:1px;background:#cfcfcf;"></div>
<div class="a" style="left:10px;top:363px;width:10px;height:1px;background:#bfc9c9;"></div>
<div class="a" style="left:20px;top:363px;width:6px;height:1px;background:#a6a6a6;"></div>
<div class="rh" style="top:369px;color:#333">8</div>
<div class="a" style="left:0px;top:383px;width:10px;height:1px;background:#cfcfcf;"></div>
<div class="a" style="left:10px;top:383px;width:10px;height:1px;background:#bfc9c9;"></div>
<div class="a" style="left:20px;top:383px;width:6px;height:1px;background:#a6a6a6;"></div>
<div class="rh" style="top:389px;color:#333">9</div>
<div class="a" style="left:0px;top:403px;width:10px;height:1px;background:#cfcfcf;"></div>
<div class="a" style="left:10px;top:403px;width:10px;height:1px;background:#bfc9c9;"></div>
<div class="a" style="left:20px;top:403px;width:6px;height:1px;background:#a6a6a6;"></div>
<div class="rh" style="top:409px;color:#333">10</div>
<div class="a" style="left:0px;top:423px;width:10px;height:1px;background:#cfcfcf;"></div>
<div class="a" style="left:10px;top:423px;width:10px;height:1px;background:#bfc9c9;"></div>
<div class="a" style="left:20px;top:423px;width:6px;height:1px;background:#a6a6a6;"></div>
<div class="rh" style="top:429px;color:#333">11</div>
<div class="a" style="left:0px;top:443px;width:10px;height:1px;background:#cfcfcf;"></div>
<div class="a" style="left:10px;top:443px;width:10px;height:1px;background:#bfc9c9;"></div>
<div class="a" style="left:20px;top:443px;width:6px;height:1px;background:#a6a6a6;"></div>
<div class="rh" style="top:449px;color:#333">12</div>
<div class="a" style="left:0px;top:463px;width:10px;height:1px;background:#cfcfcf;"></div>
<div class="a" style="left:10px;top:463px;width:10px;height:1px;background:#bfc9c9;"></div>
<div class="a" style="left:20px;top:463px;width:6px;height:1px;background:#a6a6a6;"></div>
<div class="rh" style="top:469px;color:#333">13</div>
<div class="a" style="left:0px;top:483px;width:10px;height:1px;background:#cfcfcf;"></div>
<div class="a" style="left:10px;top:483px;width:10px;height:1px;background:#bfc9c9;"></div>
<div class="a" style="left:20px;top:483px;width:6px;height:1px;background:#a6a6a6;"></div>
<div class="rh" style="top:489px;color:#333">14</div>
<div class="a" style="left:0px;top:503px;width:10px;height:1px;background:#cfcfcf;"></div>
<div class="a" style="left:10px;top:503px;width:10px;height:1px;background:#bfc9c9;"></div>
<div class="a" style="left:20px;top:503px;width:6px;height:1px;background:#a6a6a6;"></div>
<div class="rh" style="top:509px;color:#333">15</div>
<div class="a" style="left:0px;top:523px;width:10px;height:1px;background:#cfcfcf;"></div>
<div class="a" style="left:10px;top:523px;width:10px;height:1px;background:#bfc9c9;"></div>
<div class="a" style="left:20px;top:523px;width:6px;height:1px;background:#a6a6a6;"></div>
<div class="rh" style="top:529px;color:#333">16</div>
<div class="a" style="left:0px;top:543px;width:10px;height:1px;background:#cfcfcf;"></div>
<div class="a" style="left:10px;top:543px;width:10px;height:1px;background:#bfc9c9;"></div>
<div class="a" style="left:20px;top:543px;width:6px;height:1px;background:#a6a6a6;"></div>
<div class="rh" style="top:549px;color:#333">17</div>
<div class="a" style="left:0px;top:563px;width:10px;height:1px;background:#cfcfcf;"></div>
<div class="a" style="left:10px;top:563px;width:10px;height:1px;background:#bfc9c9;"></div>
<div class="a" style="left:20px;top:563px;width:6px;height:1px;background:#a6a6a6;"></div>
<div class="rh" style="top:569px;color:#333">18</div>
<div class="a" style="left:0px;top:583px;width:10px;height:1px;background:#cfcfcf;"></div>
<div class="a" style="left:10px;top:583px;width:10px;height:1px;background:#bfc9c9;"></div>
<div class="a" style="left:20px;top:583px;width:6px;height:1px;background:#a6a6a6;"></div>
<div class="rh" style="top:589px;color:#333">19</div>
<div class="a" style="left:0px;top:603px;width:10px;height:1px;background:#cfcfcf;"></div>
<div class="a" style="left:10px;top:603px;width:10px;height:1px;background:#bfc9c9;"></div>
<div class="a" style="left:20px;top:603px;width:6px;height:1px;background:#a6a6a6;"></div>
<div class="rh" style="top:609px;color:#333">20</div>
<div class="a" style="left:0px;top:623px;width:10px;height:1px;background:#cfcfcf;"></div>
<div class="a" style="left:10px;top:623px;width:10px;height:1px;background:#bfc9c9;"></div>
<div class="a" style="left:20px;top:623px;width:6px;height:1px;background:#a6a6a6;"></div>
<div class="rh" style="top:629px;color:#333">21</div>
<div class="a" style="left:0px;top:643px;width:10px;height:1px;background:#cfcfcf;"></div>
<div class="a" style="left:10px;top:643px;width:10px;height:1px;background:#bfc9c9;"></div>
<div class="a" style="left:20px;top:643px;width:6px;height:1px;background:#a6a6a6;"></div>
<div class="rh" style="top:649px;color:#333">22</div>
<div class="a" style="left:0px;top:663px;width:10px;height:1px;background:#cfcfcf;"></div>
<div class="a" style="left:10px;top:663px;width:10px;height:1px;background:#bfc9c9;"></div>
<div class="a" style="left:20px;top:663px;width:6px;height:1px;background:#a6a6a6;"></div>
<div class="rh" style="top:669px;color:#333">23</div>
<div class="a" style="left:0px;top:683px;width:10px;height:1px;background:#cfcfcf;"></div>
<div class="a" style="left:10px;top:683px;width:10px;height:1px;background:#bfc9c9;"></div>
<div class="a" style="left:20px;top:683px;width:6px;height:1px;background:#a6a6a6;"></div>
<div class="a" style="left:27px;top:243px;width:978px;height:1px;background:#d9d9d9;"></div>
<div class="a" style="left:27px;top:263px;width:978px;height:1px;background:#d9d9d9;"></div>
<div class="a" style="left:27px;top:283px;width:978px;height:1px;background:#d9d9d9;"></div>
<div class="a" style="left:27px;top:303px;width:978px;height:1px;background:#d9d9d9;"></div>
<div class="a" style="left:27px;top:323px;width:978px;height:1px;background:#d9d9d9;"></div>
<div class="a" style="left:27px;top:343px;width:978px;height:1px;background:#d9d9d9;"></div>
<div class="a" style="left:27px;top:363px;width:978px;height:1px;background:#d9d9d9;"></div>
<div class="a" style="left:27px;top:383px;width:978px;height:1px;background:#d9d9d9;"></div>
<div class="a" style="left:27px;top:403px;width:978px;height:1px;background:#d9d9d9;"></div>
<div class="a" style="left:27px;top:423px;width:978px;height:1px;background:#d9d9d9;"></div>
<div class="a" style="left:27px;top:443px;width:978px;height:1px;background:#d9d9d9;"></div>
<div class="a" style="left:27px;top:463px;width:978px;height:1px;background:#d9d9d9;"></div>
<div class="a" style="left:27px;top:483px;width:978px;height:1px;background:#d9d9d9;"></div>
<div class="a" style="left:27px;top:503px;width:978px;height:1px;background:#d9d9d9;"></div>
<div class="a" style="left:27px;top:523px;width:978px;height:1px;background:#d9d9d9;"></div>
<div class="a" style="left:27px;top:543px;width:978px;height:1px;background:#d9d9d9;"></div>
<div class="a" style="left:27px;top:563px;width:978px;height:1px;background:#d9d9d9;"></div>
<div class="a" style="left:27px;top:583px;width:978px;height:1px;background:#d9d9d9;"></div>
<div class="a" style="left:27px;top:603px;width:978px;height:1px;background:#d9d9d9;"></div>
<div class="a" style="left:27px;top:623px;width:978px;height:1px;background:#d9d9d9;"></div>
<div class="a" style="left:27px;top:643px;width:978px;height:1px;background:#d9d9d9;"></div>
<div class="a" style="left:27px;top:663px;width:978px;height:1px;background:#d9d9d9;"></div>
<div class="a" style="left:90px;top:224px;width:1px;height:453px;background:#d9d9d9;"></div>
<div class="a" style="left:154px;top:224px;width:1px;height:453px;background:#d9d9d9;"></div>
<div class="a" style="left:218px;top:224px;width:1px;height:453px;background:#d9d9d9;"></div>
<div class="a" style="left:282px;top:224px;width:1px;height:453px;background:#d9d9d9;"></div>
<div class="a" style="left:346px;top:224px;width:1px;height:453px;background:#d9d9d9;"></div>
<div class="a" style="left:410px;top:224px;width:1px;height:453px;background:#d9d9d9;"></div>
<div class="a" style="left:474px;top:224px;width:1px;height:453px;background:#d9d9d9;"></div>
<div class="a" style="left:538px;top:224px;width:1px;height:453px;background:#d9d9d9;"></div>
<div class="a" style="left:602px;top:224px;width:1px;height:453px;background:#d9d9d9;"></div>
<div class="a" style="left:666px;top:224px;width:1px;height:453px;background:#d9d9d9;"></div>
<div class="a" style="left:730px;top:224px;width:1px;height:453px;background:#d9d9d9;"></div>
<div class="a" style="left:794px;top:224px;width:1px;height:453px;background:#d9d9d9;"></div>
<div class="a" style="left:858px;top:224px;width:1px;height:453px;background:#d9d9d9;"></div>
<div class="a" style="left:922px;top:224px;width:1px;height:453px;background:#d9d9d9;"></div>
<div class="a" style="left:986px;top:224px;width:1px;height:453px;background:#d9d9d9;"></div>
<div class="a" style="left:1005px;top:224px;width:1px;height:454px;background:#a6a6a6;"></div>
<div class="v" style="left:92px;width:60px;top:249px">15</div>
<div class="v" style="left:156px;width:60px;top:249px">20</div>
<div class="v" style="left:220px;width:60px;top:249px">17</div>
<div class="v" style="left:284px;width:60px;top:249px">22</div>
<div class="v" style="left:348px;width:60px;top:249px">35</div>
<div class="v" style="left:412px;width:60px;top:249px">109</div>
<div class="v" style="left:476px;width:60px;top:249px">55</div>
<div class="v" style="left:92px;width:60px;top:269px">11</div>
<div class="v" style="left:156px;width:60px;top:269px">47</div>
<div class="v" style="left:220px;width:60px;top:269px">44</div>
<div class="v" style="left:284px;width:60px;top:269px">98</div>
<div class="v" style="left:348px;width:60px;top:269px">412</div>
<div class="v" style="left:412px;width:60px;top:269px">4</div>
<div class="v" style="left:476px;width:60px;top:269px">78</div>
<div class="v" style="left:92px;width:60px;top:329px">37,5</div>
<div class="a" style="left:89px;top:322px;width:67px;height:23px;border:2px solid #00743f"></div>
<div class="a" style="left:151px;top:339px;width:7px;height:7px;background:#00743f;border-left:1px solid #fff;border-top:1px solid #fff"></div>
<div class="a" style="left:85px;top:319px;width:76px;height:31px;border:3px solid #ff0000;border-radius:9px"></div>
<div class="a" style="left:248px;top:164px;width:274px;height:34px;border:3px solid #ff0000;border-radius:9px"></div>
<div class="a" style="left:1006px;top:204px;width:19px;height:474px;background:#e6e6e6;"></div>
<div class="a" style="left:1009px;top:206px;width:15px;height:15px;background:#fff;border:1px solid #a9b7b7"></div>
<svg style="left:1012.5px;top:211px" width="8" height="4" viewBox="0 0 8 4"><path d="M0 4H8L4 0Z" fill="#6b7772"/></svg>
<div class="a" style="left:1009px;top:221px;width:15px;height:420px;background:#fff;border:1px solid #a9b7b7"></div>
<div class="a" style="left:1009px;top:641px;width:15px;height:22px;background:#dcdcdc;"></div>
<div class="a" style="left:1009px;top:663px;width:15px;height:15px;background:#fff;border:1px solid #a9b7b7"></div>
<svg style="left:1012.5px;top:668px" width="8" height="4" viewBox="0 0 8 4"><path d="M0 0H8L4.0 4Z" fill="#6b7772"/></svg>
<div class="a" style="left:0px;top:677px;width:1025px;height:29px;background:#e6e6e6;"></div>
<div class="a" style="left:0px;top:677px;width:1006px;height:1px;background:#a6a6a6;"></div>
<div class="a" style="left:0px;top:705px;width:1025px;height:1px;background:#c6c6c6;"></div>
<svg style="left:27.5px;top:687px" width="5" height="7" viewBox="0 0 5 7"><path d="M5 0V7L0 3.5Z" fill="#b9b9b9"/></svg>
<svg style="left:56.5px;top:687px" width="5" height="7" viewBox="0 0 5 7"><path d="M0 0V7L5 3.5Z" fill="#b9b9b9"/></svg>
<div class="a" style="left:101px;top:677px;width:107px;height:25px;background:#fff;border-left:1px solid #8c8c8c;border-right:1px solid #8c8c8c"></div>
<div class="a" style="left:101px;top:700px;width:107px;height:2px;background:#00743f;"></div>
<div class="t" style="left:112px;top:684px;font-size:13px;color:#12603a;font-weight:bold;">microexcel.ru</div>
<svg style="left:240px;top:682px" width="18" height="18" viewBox="0 0 18 18"><circle cx="9" cy="9" r="8" fill="none" stroke="#c2c2c2" stroke-width="1.2"/><path d="M9 4.5V13.5M4.5 9H13.5" stroke="#c2c2c2" stroke-width="1.4"/></svg>
<div class="a" style="left:616px;top:686px;width:2px;height:2px;background:#9fb0b0;"></div>
<div class="a" style="left:616px;top:690px;width:2px;height:2px;background:#9fb0b0;"></div>
<div class="a" style="left:616px;top:694px;width:2px;height:2px;background:#9fb0b0;"></div>
<div class="a" style="left:633px;top:684px;width:16px;height:15px;background:#fff;border:1px solid #a9b7b7"></div>
<svg style="left:638px;top:688px" width="5" height="8" viewBox="0 0 5 8"><path d="M5 0V8L0 4Z" fill="#6b7772"/></svg>
<div class="a" style="left:648px;top:684px;width:320px;height:15px;background:#fff;border:1px solid #a9b7b7"></div>
<div class="a" style="left:968px;top:684px;width:24px;height:15px;background:#dcdcdc;"></div>
<div class="a" style="left:991px;top:684px;width:15px;height:15px;background:#fff;border:1px solid #a9b7b7"></div>
<svg style="left:997px;top:688px" width="5" height="8" viewBox="0 0 5 8"><path d="M0 0V8L5 4Z" fill="#6b7772"/></svg>
<div class="a" style="left:0px;top:706px;width:1025px;height:22px;background:#f3f3f3;"></div>
<div class="a" style="left:0px;top:727px;width:1025px;height:1px;background:#00743f;"></div>
<div class="t" style="left:8.4px;top:710px;font-size:12px;color:#404040;letter-spacing:-0.08px;">Готово</div>
<svg style="left:0px;top:0px" width="1025" height="728" viewBox="0 0 1025 728"><rect x="74.5" y="710.5" width="11" height="11" fill="#fff"/><path d="M74.8 716V721.2H85.2V710.8H80" fill="none" stroke="#3d3536" stroke-width="1.3"/><rect x="80" y="710.2" width="5.8" height="2.6" fill="#3d3536"/><circle cx="76" cy="711.9" r="3" fill="#3d3536"/><path d="M79 715.5H81M82 715.5H84M76 717.5H78M79 717.5H81M82 717.5H84M76 719.5H78M79 719.5H81M82 719.5H84" stroke="#3d3536" stroke-width="1"/></svg>
<div class="a" style="left:727px;top:706px;width:38px;height:21px;background:#c6c6c6;"></div>
<svg style="left:0px;top:0px" width="1025" height="728" viewBox="0 0 1025 728"><path d="M739.5 709.5H751.5V721.5H739.5Z M743.5 709.5V721.5M747.5 709.5V721.5M739.5 713.5H751.5M739.5 717.5H751.5" fill="none" stroke="#5a6663"/><path d="M777.5 709.5H790.5V721.5H777.5Z" fill="none" stroke="#5a6663" stroke-width="1"/><path d="M780.5 711.5H787.5V719.5H780.5Z" fill="none" stroke="#5a6663" stroke-width="1"/><path d="M782 713.5H786M782 715.5H786M782 717.5H786" stroke="#5a6663"/><path d="M815.5 709.5H828.5V721.5H815.5Z M815.5 716.5H823.5V709.5 M819.5 709.5V716.5" fill="none" stroke="#5a6663" stroke-width="1"/></svg>
<div class="a" style="left:846px;top:715px;width:6px;height:2px;background:#444;"></div>
<div class="a" style="left:856px;top:716px;width:100px;height:1px;background:#9aa5a3;"></div>
<div class="a" style="left:904px;top:710px;width:5px;height:11px;background:#6b7772;"></div>
<svg style="left:959px;top:712px" width="8" height="8" viewBox="0 0 8 8"><path d="M4 0V8M0 4H8" stroke="#444" stroke-width="1.6"/></svg>
<div class="t" style="left:977.6px;top:710.5px;font-size:11px;color:#404040;letter-spacing:-0.15px">100 %</div>
<div class="a" style="left:0px;top:65px;width:1px;height:663px;background:#00743f;"></div></body></html>
